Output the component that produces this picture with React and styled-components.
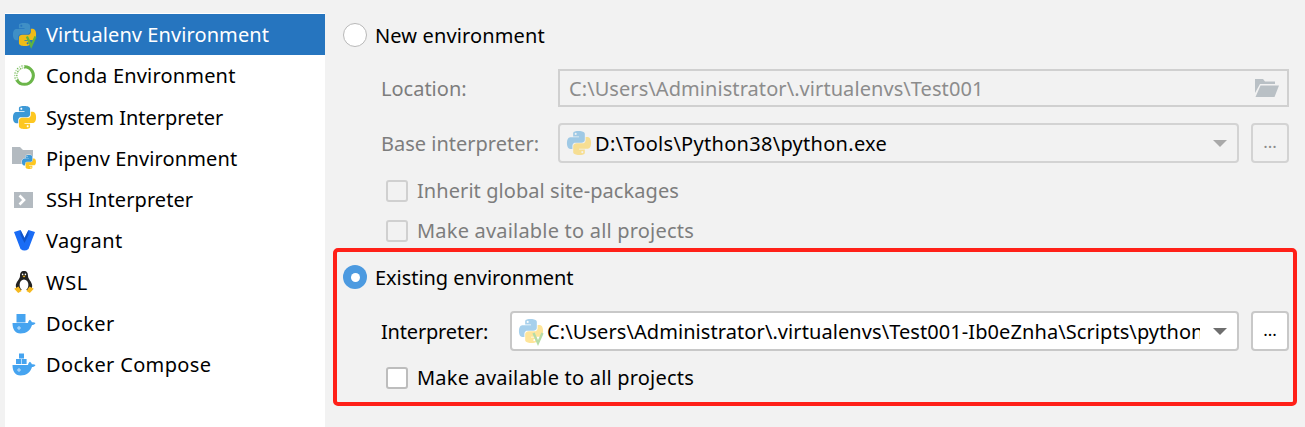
import React from "react";
import styled, { createGlobalStyle } from "styled-components";

const GlobalStyle = createGlobalStyle`
  html, body {
    margin: 0;
    padding: 0;
    background: #f2f2f2;
  }
  body {
    font-family: "Noto Sans", "Open Sans", sans-serif;
    font-size: 20px;
    color: #000;
  }
`;

const Page = styled.div`
  display: flex;
  width: 1305px;
  height: 427px;
  overflow: hidden;
  padding: 13px 0 0 5px;
  box-sizing: border-box;
`;

const Sidebar = styled.ul`
  width: 320px;
  flex: none;
  margin: 0;
  padding: 1px 0 0;
  list-style: none;
  background: #fff;
`;

const Item = styled.li`
  display: flex;
  align-items: center;
  gap: 10px;
  height: 41.25px;
  padding-left: 7px;
  background: ${(p) => (p.$active ? "#2675bf" : "transparent")};
  color: ${(p) => (p.$active ? "#fff" : "#000")};
  letter-spacing: ${(p) => p.$track || 0}px;
  white-space: nowrap;
`;

const IconSlot = styled.span`
  display: flex;
  width: 24px;
  height: 24px;
  flex: none;
  align-items: center;
  justify-content: center;
`;

const Panel = styled.div`
  flex: 1;
  min-width: 0;
  padding: 10px 16px 0 18px;
`;

const RadioRow = styled.label`
  display: flex;
  align-items: center;
  gap: 8px;
  height: 24px;
  letter-spacing: ${(p) => p.$track || 0}px;
`;

const Radio = styled.span`
  display: flex;
  width: 24px;
  height: 24px;
  flex: none;
  box-sizing: border-box;
  align-items: center;
  justify-content: center;
  border-radius: 50%;
  border: ${(p) => (p.$checked ? "none" : "1.5px solid #b8b8b8")};
  background: ${(p) => (p.$checked ? "#4c9ae0" : "#fff")};
  &::after {
    content: "";
    display: ${(p) => (p.$checked ? "block" : "none")};
    width: 9px;
    height: 9px;
    border-radius: 50%;
    background: #fff;
  }
`;

const FieldRow = styled.div`
  display: flex;
  align-items: center;
  height: ${(p) => p.$height}px;
  margin-top: ${(p) => p.$top}px;
  padding-left: 38px;
`;

const Label = styled.span`
  width: ${(p) => p.$width}px;
  flex: none;
  color: ${(p) => (p.$disabled ? "#7d7d7d" : "#000")};
  letter-spacing: ${(p) => p.$track || 0}px;
`;

const PathField = styled.div`
  display: flex;
  flex: 1;
  height: 100%;
  box-sizing: border-box;
  align-items: center;
  justify-content: space-between;
  padding: 0 8px 0 9px;
  border: 2px solid #d0d0d0;
  color: #8c8c8c;
  letter-spacing: 0.07px;
`;

const Combo = styled.div`
  display: flex;
  flex: 1;
  min-width: 0;
  height: 100%;
  box-sizing: border-box;
  align-items: center;
  gap: 4px;
  padding: 0 10px 0 7px;
  border: 2px solid ${(p) => (p.$disabled ? "#d3d3d3" : "#c8c8c8")};
  border-radius: 4px;
  background: ${(p) => (p.$disabled ? "#f2f2f2" : "#fff")};
`;

const ComboText = styled.span`
  flex: 1;
  min-width: 0;
  overflow: hidden;
  white-space: nowrap;
  letter-spacing: ${(p) => p.$track || 0}px;
`;

const Arrow = styled.span`
  flex: none;
  width: 0;
  height: 0;
  margin-left: 9px;
  border-left: 7px solid transparent;
  border-right: 7px solid transparent;
  border-top: 7px solid ${(p) => (p.$disabled ? "#a9a9a9" : "#6e6e6e")};
`;

const DotsButton = styled.button`
  display: flex;
  width: 38px;
  height: 100%;
  flex: none;
  margin: 0 0 0 12px;
  padding: 0 0 4px;
  box-sizing: border-box;
  align-items: center;
  justify-content: center;
  border: 2px solid ${(p) => (p.$disabled ? "#d3d3d3" : "#c8c8c8")};
  border-radius: 4px;
  background: ${(p) => (p.$disabled ? "#f2f2f2" : "#fff")};
  color: ${(p) => (p.$disabled ? "#8c8c8c" : "#000")};
  font: inherit;
  font-size: 17px;
`;

const CheckRow = styled.label`
  display: flex;
  align-items: center;
  gap: 9px;
  height: 22px;
  margin-top: ${(p) => p.$top}px;
  padding-left: 43px;
  color: ${(p) => (p.$disabled ? "#7d7d7d" : "#000")};
  letter-spacing: ${(p) => p.$track || 0}px;
`;

const CheckText = styled.span`
  padding-bottom: 2px;
`;

const Box = styled.span`
  width: 22px;
  height: 22px;
  flex: none;
  box-sizing: border-box;
  border: 2px solid ${(p) => (p.$disabled ? "#d0d0d0" : "#bdbdbd")};
  border-radius: 3px;
  background: ${(p) => (p.$disabled ? "#f2f2f2" : "#fff")};
`;

const Highlight = styled.section`
  margin: 6px -8px 0 -10px;
  padding: 13px 4px 13px 6px;
  border: 4px solid #ff2018;
  border-radius: 5px;
`;

const BLUE_D =
  "M14.25.18l.9.2.73.26.59.3.45.32.34.34.25.34.16.33.1.3.04.26.02.2-.01.13V8.5l-.05.63-.13.55-.21.46-.26.38-.3.31-.33.25-.35.19-.35.14-.33.1-.3.07-.26.04-.21.02H8.77l-.69.05-.59.14-.5.22-.41.27-.33.32-.27.35-.2.36-.15.37-.1.35-.07.32-.04.27-.02.21v3.06H3.17l-.21-.03-.28-.07-.32-.12-.35-.18-.36-.26-.36-.36-.35-.46-.32-.59-.28-.73-.21-.88-.14-1.05-.05-1.23.06-1.22.16-1.04.24-.87.32-.71.36-.57.4-.44.42-.33.42-.24.4-.16.36-.1.32-.05.24-.01h.16l.06.01h8.16v-.83H6.18l-.01-2.75-.02-.37.05-.34.11-.31.17-.28.25-.26.31-.23.38-.2.44-.18.51-.15.58-.12.64-.1.71-.06.77-.04.84-.02 1.27.05zm-6.3 1.98l-.23.33-.08.41.08.41.23.34.33.22.41.09.41-.09.33-.22.23-.34.08-.41-.08-.41-.23-.33-.33-.22-.41-.09-.41.09z";
const YELLOW_D =
  "M21.04 6.11l.28.06.32.12.35.18.36.27.36.35.35.47.32.59.28.73.21.88.14 1.04.05 1.23-.06 1.23-.16 1.04-.24.86-.32.71-.36.57-.4.45-.42.33-.42.24-.4.16-.36.09-.32.05-.24.02-.16-.01h-8.22v.82h5.84l.01 2.76.02.36-.05.34-.11.31-.17.29-.25.25-.31.24-.38.2-.44.17-.51.15-.58.13-.64.09-.71.07-.77.04-.84.01-1.27-.04-1.07-.14-.9-.2-.73-.25-.59-.3-.45-.33-.34-.34-.25-.34-.16-.33-.1-.3-.04-.25-.02-.2.01-.13v-5.34l.05-.64.13-.54.21-.46.26-.38.3-.32.33-.24.35-.2.35-.14.33-.1.3-.06.26-.04.21-.02.13-.01h5.84l.69-.05.59-.14.5-.21.41-.28.33-.32.27-.35.2-.36.15-.36.1-.35.07-.32.04-.28.02-.21V6.07h2.09l.14.01zm-6.47 14.25l-.23.33-.08.41.08.41.23.33.33.23.41.08.41-.08.33-.23.23-.33.08-.41-.08-.41-.23-.33-.33-.23-.41-.08-.41.08z";

const PythonIcon = ({ size = 23, faded, venv, blue = "#3d99d6", yellow = "#fdc721" }) => (
  <svg width={size} height={size} viewBox="0 0 24 24" overflow="visible" style={faded ? { opacity: 0.45 } : undefined}>
    <path d={BLUE_D} fill={blue} fillRule="evenodd" />
    <path d={YELLOW_D} fill={yellow} fillRule="evenodd" />
    {venv && (
      <path d="M14.5 14 L19 24 L23.5 14" fill="none" stroke="#5fb341" strokeWidth="2.4" />
    )}
  </svg>
);

// speckled part of the conda ring, upper left
const condaDots = [150, 165, 180, 195, 210, 225, 240, 255, 270].flatMap((deg, i) =>
  [8, 10.2].map((r, j) => ({
    key: `${deg}-${r}`,
    cx: 12 + r * Math.cos((deg * Math.PI) / 180),
    cy: 12 + r * Math.sin((deg * Math.PI) / 180),
    o: (i + j) % 2 ? 0.55 : 0.9,
  }))
);

const CondaIcon = () => (
  <svg width="23" height="23" viewBox="0 0 24 24">
    <path d="M12 2.8 A 9.2 9.2 0 1 1 4 16.6" fill="none" stroke="#6cb64a" strokeWidth="3.2" />
    {condaDots.map((d) => (
      <circle key={d.key} cx={d.cx} cy={d.cy} r="0.85" fill="#6cb64a" opacity={d.o} />
    ))}
  </svg>
);

const PipenvIcon = () => (
  <svg width="24" height="24" viewBox="0 0 24 24">
    <path d="M0 1 H8 L11 4 H21 V18 H0 Z" fill="#b3bac0" />
    <g transform="translate(10 9) scale(0.58)">
      <path d={BLUE_D} fill="#3d99d6" fillRule="evenodd" stroke="#fff" strokeWidth="1.5" paintOrder="stroke" />
      <path d={YELLOW_D} fill="#fdc721" fillRule="evenodd" />
    </g>
  </svg>
);

const SshIcon = () => (
  <svg width="20" height="18" viewBox="0 0 20 18">
    <rect width="19" height="16" y="1" fill="#b3bac0" />
    <path d="M5.5 4.5 L10 9 L5.5 13.5" fill="none" stroke="#fff" strokeWidth="2.6" />
  </svg>
);

const VagrantIcon = () => (
  <svg width="21" height="21" viewBox="0 0 21 21">
    <path d="M0 2 L6.5 0 L10.5 8 L14.5 0 L21 2 L14.5 19 Q10.5 22 6.5 19 Z" fill="#1a6cf5" />
    <path d="M6.5 0 V5 L10.5 13 L14.5 5 V0 L10.5 8 Z" fill="#1254c8" />
  </svg>
);

const TuxIcon = () => (
  <svg width="20" height="22" viewBox="0 0 20 22">
    <path d="M10 0 C7 0 6 2 6 5 C6 8 1.8 11 1.8 15 L2.5 19 L17.5 19 L18.2 15 C18.2 11 14 8 14 5 C14 2 13 0 10 0 Z" fill="#222" />
    <ellipse cx="10" cy="14" rx="4.4" ry="5.6" fill="#fff" />
    <circle cx="8.6" cy="3.4" r="0.8" fill="#fff" />
    <circle cx="11.4" cy="3.4" r="0.8" fill="#fff" />
    <path d="M8.3 4.8 H11.7 L10 6.6 Z" fill="#f5b921" />
    <path d="M0.2 17.8 L4.5 15.5 L7.6 20 L4.2 22 Z" fill="#f5b921" />
    <path d="M19.8 17.8 L15.5 15.5 L12.4 20 L15.8 22 Z" fill="#f5b921" />
  </svg>
);

const DockerIcon = ({ compose }) => (
  <svg width="24" height="24" viewBox="0 0 24 24">
    {compose ? (
      <g fill="#46a4f0">
        <rect x="7" y="0.5" width="5" height="5" />
        <rect x="4" y="6" width="5" height="5" />
        <rect x="9.6" y="6" width="5" height="5" />
      </g>
    ) : (
      <rect x="4.5" y="3" width="9" height="8.5" fill="#46a4f0" />
    )}
    <path
      d="M0.5 12 H16 C16.2 10.5 17 9.4 18 8.8 C19 9.6 19.7 10.4 19.9 11.3 C21 11 22.5 11.2 23.5 12 C22.8 13.4 21.4 14 20 14 C18.6 19.2 14.5 22.5 8.5 22.5 C3 22.5 0.5 18 0.5 12 Z"
      fill="#46a4f0"
    />
    <circle cx="7" cy="17" r="1.2" fill="none" stroke="#fff" strokeWidth="0.7" />
  </svg>
);

const FolderIcon = () => (
  <svg width="24" height="18" viewBox="0 0 24 18">
    <path d="M0 0 H8 L10 2.5 H20 V5 H5 L0 14 Z" fill="#b9c0c5" />
    <path d="M5.5 6.5 H24 L19.5 18 H0.5 Z" fill="#b9c0c5" />
  </svg>
);

const sidebarItems = [
  { name: "Virtualenv Environment", track: 0.09, icon: <PythonIcon venv blue="#3f8fc6" yellow="#efbb18" />, active: true },
  { name: "Conda Environment", track: 0.18, icon: <CondaIcon /> },
  { name: "System Interpreter", icon: <PythonIcon /> },
  { name: "Pipenv Environment", track: 0.11, icon: <PipenvIcon /> },
  { name: "SSH Interpreter", track: 0.07, icon: <SshIcon /> },
  { name: "Vagrant", track: 0.4, icon: <VagrantIcon /> },
  { name: "WSL", track: 0.6, icon: <TuxIcon /> },
  { name: "Docker", track: 0.33, icon: <DockerIcon /> },
  { name: "Docker Compose", track: 0.35, icon: <DockerIcon compose /> },
];

export default function App() {
  return (
    <Page>
      <GlobalStyle />
      <Sidebar>
        {sidebarItems.map((item) => (
          <Item key={item.name} $active={item.active} $track={item.track}>
            <IconSlot>{item.icon}</IconSlot>
            {item.name}
          </Item>
        ))}
      </Sidebar>
      <Panel>
        <RadioRow $track={0.13}>
          <Radio />
          New environment
        </RadioRow>
        <FieldRow $height={38} $top={22}>
          <Label $width={177} $disabled>Location:</Label>
          <PathField>
            <span>C:\Users\Administrator\.virtualenvs\Test001</span>
            <FolderIcon />
          </PathField>
        </FieldRow>
        <FieldRow $height={40} $top={16}>
          <Label $width={177} $disabled>Base interpreter:</Label>
          <Combo $disabled>
            <PythonIcon size={24} faded />
            <ComboText $track={0.29}>D:\Tools\Python38\python.exe</ComboText>
            <Arrow $disabled />
          </Combo>
          <DotsButton $disabled>...</DotsButton>
        </FieldRow>
        <CheckRow $top={17} $disabled $track={0.07}>
          <Box $disabled />
          <CheckText>Inherit global site-packages</CheckText>
        </CheckRow>
        <CheckRow $top={18} $disabled $track={0.2}>
          <Box $disabled />
          <CheckText>Make available to all projects</CheckText>
        </CheckRow>
        <Highlight>
          <RadioRow $track={-0.05}>
            <Radio $checked />
            Existing environment
          </RadioRow>
          <FieldRow $height={40} $top={22}>
            <Label $width={129} $track={-0.18}>Interpreter:</Label>
            <Combo>
              <PythonIcon size={24} faded venv />
              <ComboText $track={0.08}>C:\Users\Administrator\.virtualenvs\Test001-Ib0eZnha\Scripts\python.exe</ComboText>
              <Arrow />
            </Combo>
            <DotsButton>...</DotsButton>
          </FieldRow>
          <CheckRow $top={16} $track={0.2}>
            <Box />
            <CheckText>Make available to all projects</CheckText>
          </CheckRow>
        </Highlight>
      </Panel>
    </Page>
  );
}
